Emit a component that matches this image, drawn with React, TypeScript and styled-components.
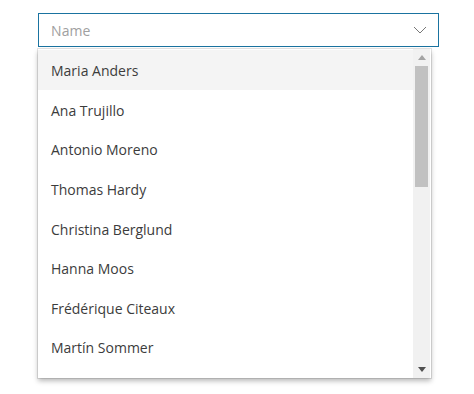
import React from 'react';
import styled, { createGlobalStyle } from 'styled-components';

const GlobalStyle = createGlobalStyle`
  html, body {
    margin: 0;
    padding: 0;
    background: #ffffff;
  }
  body {
    font-family: 'Open Sans', 'Noto Sans', 'Liberation Sans', sans-serif;
  }
`;

const Page = styled.div`
  padding: 13px 0 20px 38px;
  width: 401px;
`;

const Combo = styled.div`
  height: 32px;
  border: 1px solid #1a73a0;
  display: flex;
  align-items: center;
  padding: 0 11px 0 12px;
  box-sizing: content-box;
  width: 376px;
`;

const Placeholder = styled.span`
  flex: 1;
  font-size: 14px;
  color: #a0a0a0;
  letter-spacing: 0.1px;
`;

const Popup = styled.div`
  margin-top: 2px;
  width: 393px;
  height: 329px;
  display: flex;
  background: #fff;
  box-shadow: 0 3px 5px rgba(0, 0, 0, 0.28), 0 0 0 1px rgba(0, 0, 0, 0.1);
  overflow: hidden;
`;

const List = styled.ul`
  list-style: none;
  margin: 0;
  padding: 1px 0 0;
  flex: 1;
`;

const Item = styled.li<{ $active?: boolean }>`
  height: 39.6px;
  box-sizing: border-box;
  display: flex;
  align-items: center;
  padding: 2px 0 0 13px;
  font-size: 14px;
  color: #3c3c3c;
  background: ${(p) => (p.$active ? '#f4f4f4' : 'transparent')};
`;

const Track = styled.div`
  width: 17px;
  margin-right: 1px;
  background: #f1f1f1;
  display: flex;
  flex-direction: column;
  align-items: center;
`;

const Arrow = styled.div`
  height: 17px;
  width: 17px;
  display: flex;
  align-items: center;
  justify-content: center;
`;

const Thumb = styled.div`
  width: 13px;
  height: 121px;
  background: #c1c1c1;
`;

const Spacer = styled.div`
  flex: 1;
`;

const names = [
  'Maria Anders',
  'Ana Trujillo',
  'Antonio Moreno',
  'Thomas Hardy',
  'Christina Berglund',
  'Hanna Moos',
  'Frédérique Citeaux',
  'Martín Sommer',
];

const App = () => (
  <>
    <GlobalStyle />
    <Page>
      <Combo>
        <Placeholder>Name</Placeholder>
        <svg width="14" height="8" viewBox="0 0 14 8">
          <path d="M1 1 L7 7 L13 1" fill="none" stroke="#777" strokeWidth="1" />
        </svg>
      </Combo>
      <Popup>
        <List>
          {names.map((n, i) => (
            <Item key={n} $active={i === 0}>
              {n}
            </Item>
          ))}
        </List>
        <Track>
          <Arrow>
            <svg width="8" height="5" viewBox="0 0 8 5">
              <path d="M0 5 L4 0 L8 5 Z" fill="#a3a3a3" />
            </svg>
          </Arrow>
          <Thumb />
          <Spacer />
          <Arrow>
            <svg width="8" height="5" viewBox="0 0 8 5">
              <path d="M0 0 L4 5 L8 0 Z" fill="#505050" />
            </svg>
          </Arrow>
        </Track>
      </Popup>
    </Page>
  </>
);

export default App;
